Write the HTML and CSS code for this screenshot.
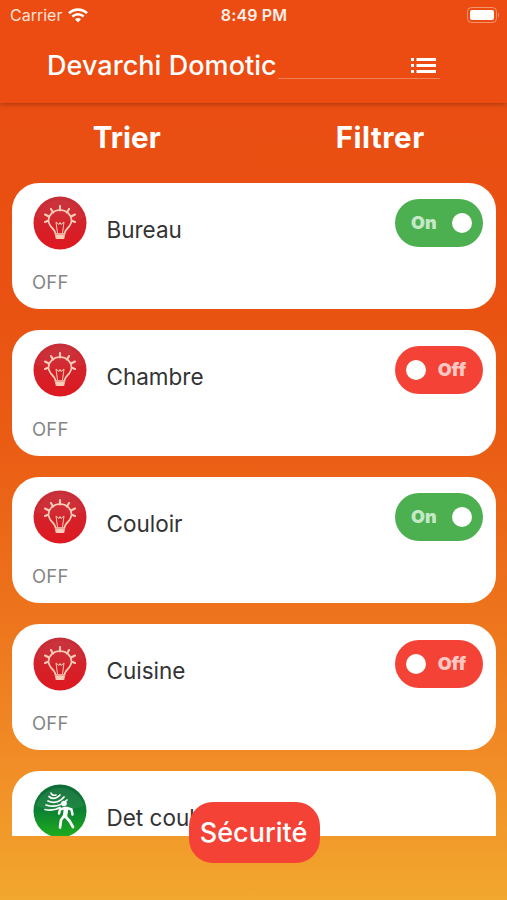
FILE: index.html
```html
<!DOCTYPE html>
<html lang="fr">

<head>
    <meta charset="UTF-8">
    <meta name="viewport" content="width=device-width, initial-scale=1.0">
    <title>Devarchi Domotic</title>
    <link rel="stylesheet" href="styles.css">
</head>

<body>
    <!-- shared icons -->
    <svg class="sprite" width="0" height="0">
        <defs>
            <linearGradient id="red" x1="0" y1="0" x2="0" y2="1">
                <stop offset="0" stop-color="#c6303a" />
                <stop offset="0.45" stop-color="#d2232b" />
                <stop offset="1" stop-color="#df1820" />
            </linearGradient>
            <linearGradient id="green" x1="0" y1="0" x2="0" y2="1">
                <stop offset="0" stop-color="#0e6b37" />
                <stop offset="0.5" stop-color="#0c8232" />
                <stop offset="1" stop-color="#1fae1c" />
            </linearGradient>
        </defs>
        <symbol id="bulb" viewBox="0 0 54 54">
            <circle cx="27" cy="27" r="26.5" fill="url(#red)" />
            <path d="M3 22a25 25 0 0 1 48 0q-24 8-48 0z" fill="#fff" opacity="0.03" />
            <g fill="none" stroke="#f9cdb8" stroke-width="1.7" stroke-linecap="round">
                <path d="M22.500 38c0-5-7-7-7-13.500a11.500 10.500 0 0 1 23 0c0 6.500-7 8.500-7 13.500z" />
                <path d="M24.500 37l-1.500-11 3 2.500 1-2 1 2 3-2.500-1.500 11" stroke-width="1" />
                <path d="M12 26l2.500-1M12 18.500l4 2M18 13l2 3.500M27 10v4.500M36 13l-2 3.500M42 18.500l-4 2M42 26l-2.500-1" stroke-width="2.100" />
                <path d="M23 40h8M23.500 42h7" stroke-width="2.200" />
            </g>
        </symbol>
        <symbol id="motion" viewBox="0 0 54 54">
            <circle cx="27" cy="27" r="26.500" fill="url(#green)" />
            <path d="M3 22a25 25 0 0 1 48 0q-24 8-48 0z" fill="#fff" opacity="0.07" />
            <g fill="none" stroke="#fff" stroke-linecap="round" stroke-linejoin="round">
                <g stroke-width="1.700">
                    <path d="M18 9q1 3 5 2" />
                    <path d="M16 12.500q5 4.500 11-1.500" />
                    <path d="M15 17q9 4 16-4" />
                    <path d="M13 21q12 4 21-5" />
                    <path d="M12 25.500q8 2 15-2" />
                </g>
                <path d="M33 25l-1 7" stroke-width="4.500" />
                <path d="M32 24l-5 1.500-1 4M34 24l4.500 1.500 1 5" stroke-width="2.500" />
                <path d="M31 32l-3 4-1 7.500M33 33l3.500 4 3.500 6" stroke-width="2.700" />
            </g>
            <circle cx="31" cy="19.500" r="2.800" fill="#fff" />
        </symbol>
    </svg>

    <div class="phone">
        <header class="header">
            <div class="status-bar">
                <div class="carrier">
                    <span>Carrier</span>
                    <svg width="20" height="15" viewBox="0 0 20 15">
                        <g fill="none" stroke="#fff" stroke-width="2.600">
                            <path d="M1 5.200a13 13 0 0 1 18 0" />
                            <path d="M4.300 8.600a8.200 8.200 0 0 1 11.400 0" />
                        </g>
                        <path d="M10 14.500l-3-3.200a4.200 4.200 0 0 1 6 0z" fill="#fff" />
                    </svg>
                </div>
                <span class="time">8:49 PM</span>
                <svg class="battery" width="33" height="16" viewBox="0 0 33 16">
                    <rect x="0.500" y="0.500" width="29" height="15" rx="4" fill="none" stroke="#fff" stroke-opacity="0.400" />
                    <rect x="3" y="3" width="24" height="10" rx="2" fill="#fff" />
                    <path d="M31 5.500q2 2.500 0 5z" fill="#fff" opacity="0.450" />
                </svg>
            </div>
            <div class="title-bar">
                <h1 class="title">Devarchi Domotic</h1>
                <div class="dropdown">
                    <svg width="26" height="16" viewBox="0 0 26 16">
                        <path d="M0 0h3v3H0zM0 6h3v3H0zM0 12h3v3H0zM5.500 0H25v3H5.500zM5.500 6H25v3H5.500zM5.500 12H25v3H5.500z" fill="#fff" />
                    </svg>
                </div>
            </div>
        </header>

        <nav class="actions">
            <span class="trier">Trier</span>
            <span class="filtrer">Filtrer</span>
        </nav>

        <main class="list">
            <div class="card">
                <svg class="icon"><use href="#bulb" /></svg>
                <span class="name">Bureau</span>
                <div class="switch on"><span>On</span><i class="knob"></i></div>
                <span class="state">OFF</span>
            </div>
            <div class="card">
                <svg class="icon"><use href="#bulb" /></svg>
                <span class="name">Chambre</span>
                <div class="switch off"><i class="knob"></i><span>Off</span></div>
                <span class="state">OFF</span>
            </div>
            <div class="card">
                <svg class="icon"><use href="#bulb" /></svg>
                <span class="name">Couloir</span>
                <div class="switch on"><span>On</span><i class="knob"></i></div>
                <span class="state">OFF</span>
            </div>
            <div class="card">
                <svg class="icon"><use href="#bulb" /></svg>
                <span class="name">Cuisine</span>
                <div class="switch off"><i class="knob"></i><span>Off</span></div>
                <span class="state">OFF</span>
            </div>
            <div class="card">
                <svg class="icon"><use href="#motion" /></svg>
                <span class="name">Det coul</span>
            </div>
        </main>

        <button class="security">Sécurité</button>
    </div>
</body>

</html>
```
FILE: styles.css
```css
* {
    box-sizing: border-box;
}

body {
    margin: 0;
    font-family: Inter, "Liberation Sans", sans-serif;
}

.sprite {
    position: absolute;
}

.phone {
    position: relative;
    height: 900px;
    overflow: hidden;
    background: linear-gradient(#ea4b12 0, #e95212 300px, #ea5c14 440px, #ed731c 610px, #f18c26 760px, #f2a72e 900px);
}

.header {
    height: 103px;
    background: #ec4b12;
    box-shadow: 0 1px 5px rgba(0, 0, 0, 0.3);
    color: #fff;
}

.status-bar {
    display: grid;
    grid-template-columns: 1fr auto 1fr;
    align-items: center;
    height: 30px;
    padding: 0 9px 0 10px;
    font-size: 16px;
}

.carrier {
    display: flex;
    align-items: center;
    gap: 6px;
    color: #ffe3d8;
}

.time {
    font-weight: 600;
    letter-spacing: 0.15px;
    color: #fff0ea;
}

.battery {
    justify-self: end;
    margin: -1px -2px 0 0;
}

.title-bar {
    display: flex;
    padding-left: 47px;
}

.title {
    width: 231px;
    margin: 18px 0 0;
    font-size: 27px;
    font-weight: 500;
    letter-spacing: 0.05px;
    line-height: 36px;
    white-space: nowrap;
}

.dropdown {
    display: flex;
    justify-content: flex-end;
    width: 162px;
    height: 49px;
    padding: 28px 3px 0 0;
    border-bottom: 1px solid rgba(255, 255, 255, 0.3);
}

.actions {
    display: grid;
    grid-template-columns: 1fr 1fr;
    height: 80px;
    line-height: 69px;
    font-size: 29.5px;
    font-weight: 700;
    text-align: center;
    color: #fff;
}

.filtrer {
    letter-spacing: 0.5px;
}

/* the last card is cut by the bottom of the list */
.list {
    display: flex;
    flex-direction: column;
    gap: 21px;
    height: 653px;
    padding: 0 11px 0 12px;
    overflow: hidden;
}

.card {
    display: grid;
    grid-template-columns: 74px 1fr 88px;
    grid-template-rows: 66px 1fr;
    flex: none;
    height: 126px;
    padding: 13px 13px 0 20.5px;
    border-radius: 27px;
    background: #fff;
}

.icon {
    width: 54px;
    height: 54px;
}

.name {
    font-size: 22.5px;
    line-height: 67px;
    color: #333;
}

.switch {
    display: flex;
    align-items: center;
    justify-content: space-between;
    height: 48px;
    margin-top: 3px;
    padding: 0 11px 0 16px;
    border-radius: 24px;
    font-size: 18px;
    line-height: 48px;
    font-weight: 900;
}

.switch span {
    margin-top: -1px;
}

.on {
    background: #4caf50;
    color: #c5e8c7;
}

.off {
    padding: 0 17px 0 11px;
    background: #f44336;
    color: #fcc7c3;
}

.knob {
    width: 20px;
    height: 20px;
    border-radius: 50%;
    background: #fff;
}

.state {
    grid-column: 1;
    margin-left: -0.5px;
    font-size: 18.5px;
    letter-spacing: 0.2px;
    line-height: 41px;
    color: #858585;
}

.security {
    position: absolute;
    left: 189px;
    top: 802px;
    width: 131px;
    height: 61px;
    padding: 0 2px 0 0;
    border: 0;
    border-radius: 24px;
    background: #f44336;
    font-family: inherit;
    font-size: 27px;
    font-weight: 500;
    color: #fff;
}
```
